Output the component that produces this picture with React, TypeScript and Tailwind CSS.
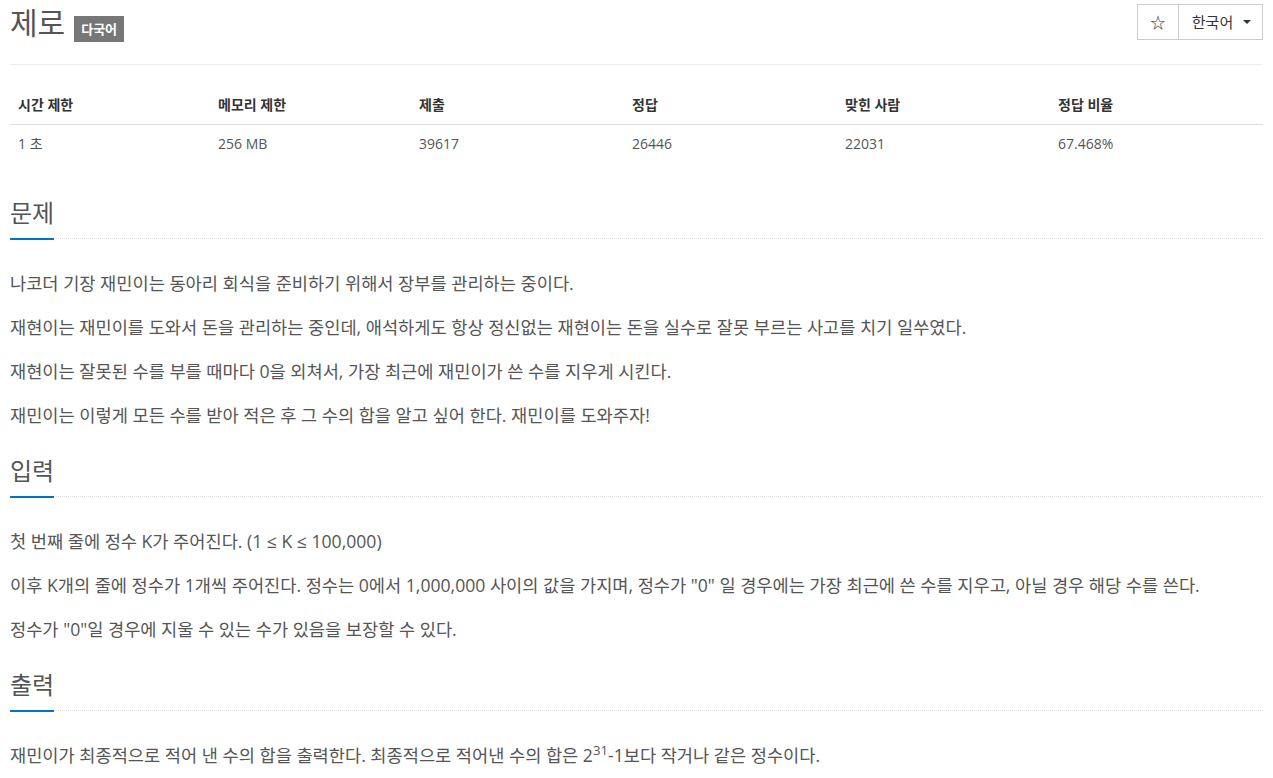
import { ReactNode } from "react";

const FONT = "font-['Open_Sans','Noto_Sans_CJK_KR',sans-serif]";

const stats = [
  { label: "시간 제한", value: "1 초" },
  { label: "메모리 제한", value: "256 MB" },
  { label: "제출", value: "39617" },
  { label: "정답", value: "26446" },
  { label: "맞힌 사람", value: "22031" },
  { label: "정답 비율", value: "67.468%" },
];

function Section({ title, children }: { title: string; children: ReactNode }) {
  return (
    <section className="mt-[26px]">
      <div className="flex items-end mb-[31px]">
        <h2 className="text-[24px] leading-9 pb-[7px] border-b-2 border-[#0076c0] text-[#555]">
          {title}
        </h2>
        <div className="flex-1 border-b border-dotted border-[#ddd] mb-[1px]" />
      </div>
      <div className="text-[17.6px] leading-6 text-[#555]">{children}</div>
    </section>
  );
}

function P({ children }: { children: ReactNode }) {
  return <p className="mb-5">{children}</p>;
}

export default function App() {
  return (
    <div className={`${FONT} bg-white px-[10px] min-h-screen`}>
      <div className="flex items-start justify-between pb-[22px] border-b border-[#eee]">
        <div className="flex items-baseline gap-[9px] mt-[5px]">
          <h1 className="text-[30px] leading-9 text-[#555]">제로</h1>
          <span className="bg-[#777] text-white text-[13px] font-bold leading-4 px-[7px] py-[5px]">
            다국어
          </span>
        </div>
        <div className="flex mt-[4px] h-[36px] border border-[#ccc] text-[15px] text-[#333]">
          <button className="w-[41px] flex items-center justify-center border-r border-[#ccc]">
            ☆
          </button>
          <button className="w-[83px] flex items-center justify-center gap-[10px] pl-[2px]">
            <span>한국어</span>
            <span className="w-0 h-0 border-l-4 border-r-4 border-t-4 border-l-transparent border-r-transparent border-t-[#333]" />
          </button>
        </div>
      </div>

      <table className="w-full table-fixed mt-[23px] mb-[34px] text-[14px] leading-5">
        <colgroup>
          <col className="w-[200px]" />
          <col className="w-[201px]" />
          <col />
          <col />
          <col />
          <col />
        </colgroup>
        <thead>
          <tr className="border-b border-[#ddd]">
            {stats.map((s) => (
              <th key={s.label} className="px-2 pt-[7px] pb-[9px] text-left font-bold text-[#333]">
                {s.label}
              </th>
            ))}
          </tr>
        </thead>
        <tbody>
          <tr>
            {stats.map((s) => (
              <td key={s.label} className="px-2 pt-[9px] pb-[7px] text-[#555]">
                {s.value}
              </td>
            ))}
          </tr>
        </tbody>
      </table>

      <Section title="문제">
        <P>나코더 기장 재민이는 동아리 회식을 준비하기 위해서 장부를 관리하는 중이다.</P>
        <P>
          재현이는 재민이를 도와서 돈을 관리하는 중인데, 애석하게도 항상 정신없는 재현이는 돈을 실수로 잘못 부르는 사고를 치기 일쑤였다.
        </P>
        <P>재현이는 잘못된 수를 부를 때마다 0을 외쳐서, 가장 최근에 재민이가 쓴 수를 지우게 시킨다.</P>
        <P>재민이는 이렇게 모든 수를 받아 적은 후 그 수의 합을 알고 싶어 한다. 재민이를 도와주자!</P>
      </Section>

      <Section title="입력">
        <P>첫 번째 줄에 정수 K가 주어진다. (1 ≤ K ≤ 100,000)</P>
        <P>
          이후 K개의 줄에 정수가 1개씩 주어진다. 정수는 0에서 1,000,000 사이의 값을 가지며, 정수가 "0" 일 경우에는 가장 최근에 쓴 수를 지우고, 아닐 경우 해당 수를 쓴다.
        </P>
        <P>정수가 "0"일 경우에 지울 수 있는 수가 있음을 보장할 수 있다.</P>
      </Section>

      <Section title="출력">
        <P>
          재민이가 최종적으로 적어 낸 수의 합을 출력한다. 최종적으로 적어낸 수의 합은 2<sup>31</sup>-1보다 작거나 같은 정수이다.
        </P>
      </Section>
    </div>
  );
}
